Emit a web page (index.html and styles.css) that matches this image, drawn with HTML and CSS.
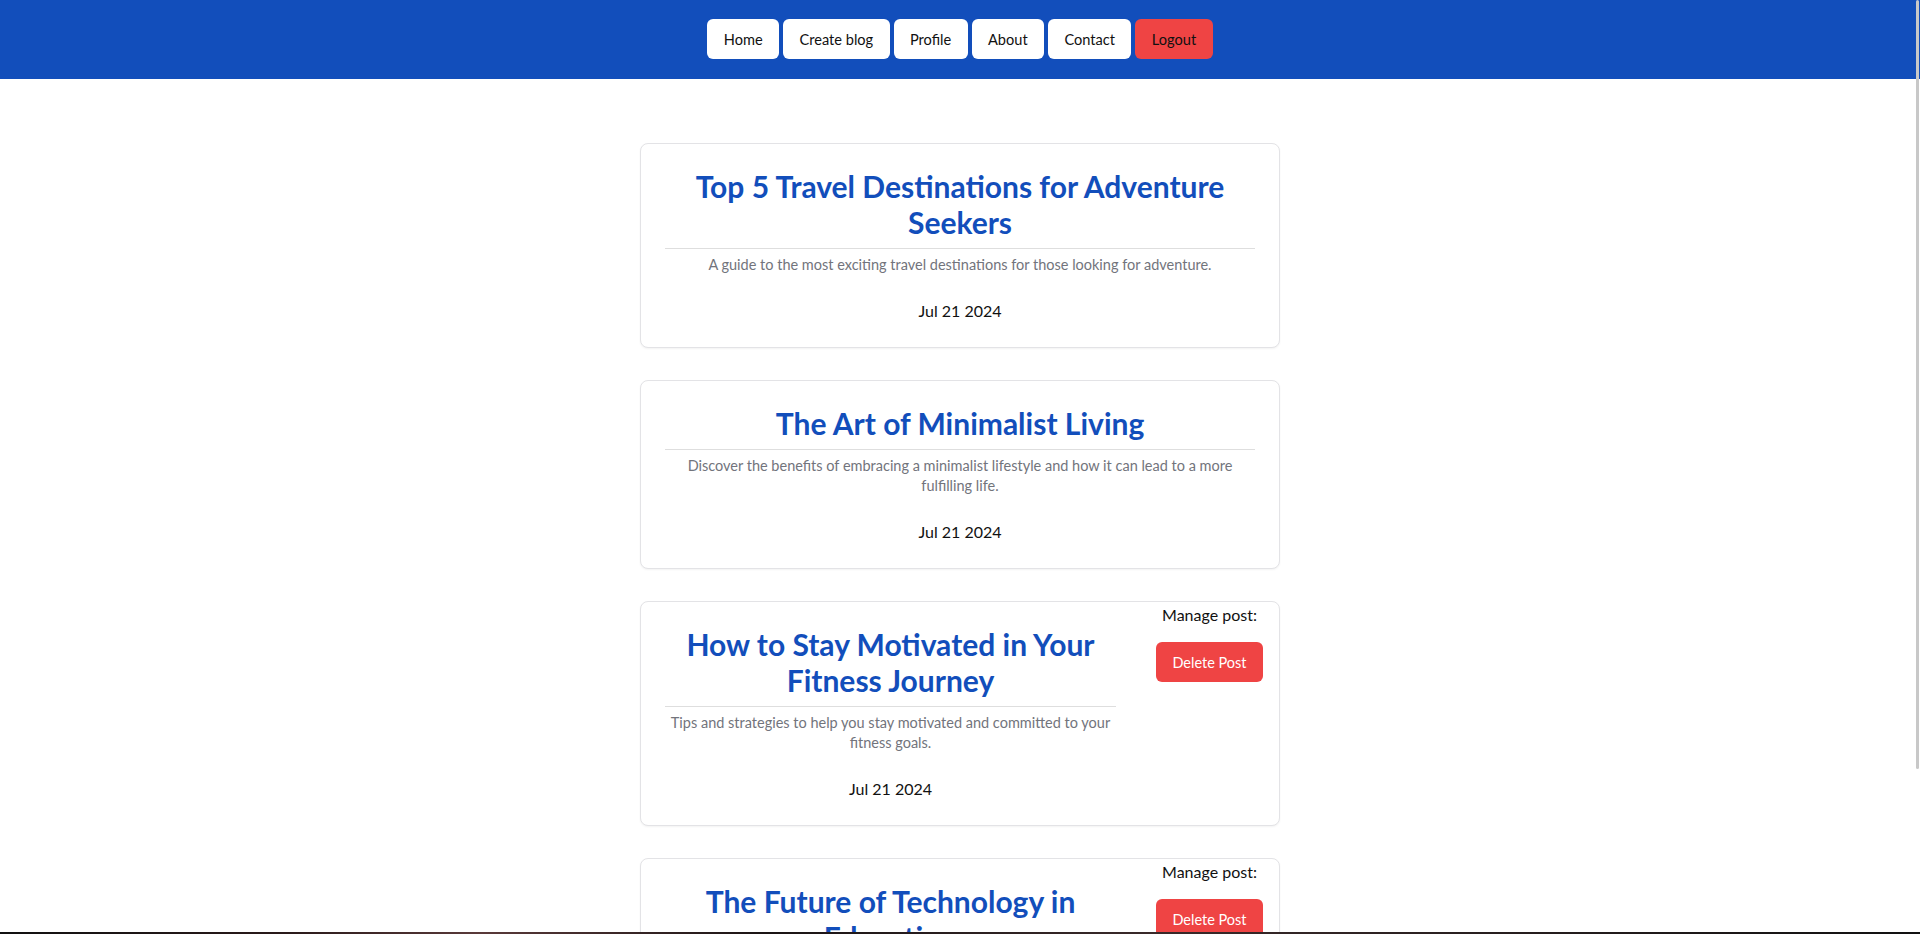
FILE: index.html
```html
<!DOCTYPE html>
<html lang="en">
<head>
<meta charset="utf-8">
<title>Blog</title>
<link rel="stylesheet" href="styles.css">
</head>
<body>
<header class="topbar">
  <nav class="nav">
    <a class="nav-btn" href="#">Home</a>
    <a class="nav-btn" href="#">Create blog</a>
    <a class="nav-btn" href="#">Profile</a>
    <a class="nav-btn" href="#">About</a>
    <a class="nav-btn" href="#">Contact</a>
    <a class="nav-btn nav-btn-logout" href="#">Logout</a>
  </nav>
</header>
<main class="feed">
  <article class="card">
    <div class="card-body">
      <h2 class="card-title">Top 5 Travel Destinations for Adventure Seekers</h2>
      <hr class="card-rule">
      <p class="card-desc">A guide to the most exciting travel destinations for those looking for adventure.</p>
      <p class="card-date">Jul 21 2024</p>
    </div>
  </article>
  <article class="card">
    <div class="card-body">
      <h2 class="card-title">The Art of Minimalist Living</h2>
      <hr class="card-rule">
      <p class="card-desc">Discover the benefits of embracing a minimalist lifestyle and how it can lead to a more fulfilling life.</p>
      <p class="card-date">Jul 21 2024</p>
    </div>
  </article>
  <article class="card">
    <div class="card-body">
      <h2 class="card-title">How to Stay Motivated in Your Fitness Journey</h2>
      <hr class="card-rule">
      <p class="card-desc">Tips and strategies to help you stay motivated and committed to your fitness goals.</p>
      <p class="card-date">Jul 21 2024</p>
    </div>
    <aside class="card-manage">
      <p class="manage-label">Manage post:</p>
      <button class="btn-delete" type="button">Delete Post</button>
    </aside>
  </article>
  <article class="card">
    <div class="card-body">
      <h2 class="card-title">The Future of Technology in Education</h2>
      <hr class="card-rule">
      <p class="card-desc">Exploring how emerging technologies are transforming the way we learn and teach.</p>
      <p class="card-date">Jul 21 2024</p>
    </div>
    <aside class="card-manage">
      <p class="manage-label">Manage post:</p>
      <button class="btn-delete" type="button">Delete Post</button>
    </aside>
  </article>
</main>
<div class="scroll-thumb"></div>
<div class="screen-edge"></div>
</body>
</html>
```
FILE: styles.css
```css
* { box-sizing: border-box; }

html, body {
  margin: 0;
  padding: 0;
  background: #ffffff;
}

body {
  font-family: Lato, "Noto Sans", "Liberation Sans", sans-serif;
  color: #111111;
}

.topbar {
  background: #124ebb;
  padding: 19px 0 20px;
}

.nav {
  display: flex;
  justify-content: center;
  gap: 4px;
}

.nav-btn {
  display: flex;
  align-items: center;
  height: 40px;
  padding: 0 16.4px;
  background: #ffffff;
  color: #111111;
  border-radius: 6px;
  font-size: 14.6px;
  text-decoration: none;
}

.nav-btn-logout {
  background: #ef4444;
}

.feed {
  display: flex;
  flex-direction: column;
  align-items: center;
  gap: 32px;
  padding: 64px 0 52px;
}

.card {
  width: 640px;
  display: flex;
  align-items: flex-start;
  border: 1px solid #e3e3e6;
  border-radius: 8px;
  box-shadow: 0 1px 2px rgba(0, 0, 0, 0.05);
  background: #ffffff;
}

.card-body {
  flex: 1;
  min-width: 0;
  padding: 24px;
  text-align: center;
}

.card-title {
  margin: 0 0 8px;
  font-size: 30px;
  line-height: 36px;
  font-weight: 700;
  color: #124ebb;
}

.card-rule {
  margin: 0 0 6px;
  border: 0;
  border-top: 1px solid #dedede;
}

.card-desc {
  margin: 0;
  font-size: 14.5px;
  line-height: 20px;
  color: #72747c;
}

.card-date {
  margin: 24px 0 0;
  font-size: 16px;
  line-height: 24px;
  color: #111111;
}

.card-manage {
  width: 107px;
  margin: 0 16px;
  padding-top: 1px;
  text-align: center;
}

.manage-label {
  margin: 0;
  font-size: 16px;
  line-height: 24px;
  white-space: nowrap;
}

.btn-delete {
  margin-top: 15px;
  width: 107px;
  height: 40px;
  border: 0;
  border-radius: 6px;
  background: #ef4444;
  color: #ffffff;
  font-family: inherit;
  font-size: 14.5px;
  cursor: pointer;
}

.scroll-thumb {
  position: fixed;
  top: 0;
  right: 1px;
  width: 3px;
  height: 769px;
  background: #c8c8c8;
  border-radius: 2px;
}

.screen-edge {
  position: fixed;
  left: 0;
  right: 0;
  bottom: 0;
  height: 2px;
  background: linear-gradient(90deg, #111 0%, #2a1a1a 15%, #5a3a3a 25%, #1a1414 40%, #3a2a2a 60%, #111 100%);
}
```
